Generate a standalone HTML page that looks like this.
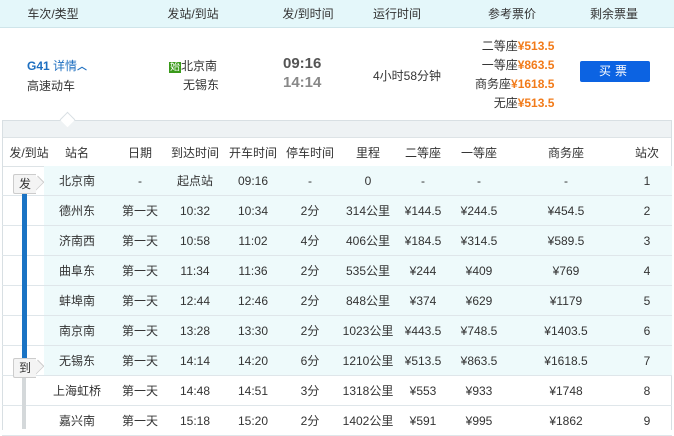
<!DOCTYPE html><html><head><meta charset="utf-8"><style>
body{margin:0;width:674px;height:429px;overflow:hidden;background:#fff;font-family:"Liberation Sans","Noto Sans CJK SC",sans-serif;font-size:12px;color:#333;position:relative}
.a{position:absolute;white-space:nowrap}
.c{position:absolute;width:90px;text-align:center;white-space:nowrap;line-height:14px}
.row{position:absolute;left:2px;width:670px;height:30px;border-bottom:1px solid #dfe6ea;box-sizing:border-box}
.hl{position:absolute;left:42px;right:0;top:0;bottom:0;background:#eefafb}
.row .c{top:8px}
.o{color:#f27b1a;font-weight:bold}
.tag{position:absolute;left:13px;width:22px;height:18px;background:#f4f4f4;border:1px solid #ccc;border-right:none;border-radius:2px 0 0 2px;text-align:center;line-height:18px;font-size:12px}
.tag:after{content:"";position:absolute;right:-7px;top:2px;width:12px;height:12px;background:#f4f4f4;border-right:1px solid #ccc;border-top:1px solid #ccc;transform:rotate(45deg) scaleX(.7);z-index:-1}
</style></head><body>
<div class="a" style="left:0;top:0;width:674px;height:27px;background:#e4f7fa;border-bottom:1px solid #cfe5ea"></div>
<div class="c" style="left:8px;top:7px">车次/类型</div>
<div class="c" style="left:148px;top:7px">发站/到站</div>
<div class="c" style="left:263px;top:7px">发/到时间</div>
<div class="c" style="left:352px;top:7px">运行时间</div>
<div class="c" style="left:467px;top:7px">参考票价</div>
<div class="c" style="left:569px;top:7px">剩余票量</div>

<div class="a" style="left:27px;top:57px;color:#1e6fc0;font-weight:bold">G41 <span style="font-weight:normal">详情</span><span style="font-size:10px">︿</span></div>
<div class="a" style="left:27px;top:77px">高速动车</div>
<div class="a" style="left:169px;top:57px"><span style="background:#3a9a1a;color:#fff;font-size:10px;padding:0 1px">始</span>北京南</div>
<div class="a" style="left:183px;top:76px">无锡东</div>
<div class="a" style="left:283px;top:55px;font-weight:bold;font-size:15px;color:#555">09:16</div>
<div class="a" style="left:283px;top:74px;font-weight:bold;font-size:15px;color:#888">14:14</div>
<div class="a" style="left:373px;top:67px">4小时58分钟</div>
<div class="a" style="left:475px;top:37px;text-align:right;line-height:19px"><div>二等座<span class="o">¥513.5</span></div><div>一等座<span class="o">¥863.5</span></div><div>商务座<span class="o">¥1618.5</span></div><div style="padding-left:12px">无座<span class="o">¥513.5</span></div></div>
<div class="a" style="left:580px;top:61px;width:70px;height:21px;background:#0c63e2;border-radius:2px;color:#fff;text-align:center;line-height:21px;letter-spacing:4px">买票</div>

<div class="a" style="left:2px;top:120px;width:668px;height:309px;border:1px solid #d8dfe3;border-bottom:none"></div>
<div class="a" style="left:3px;top:121px;width:668px;height:16px;background:#eef2f4;border-bottom:1px solid #dde3e6"></div>
<div class="a" style="left:62px;top:114px;width:10px;height:10px;background:#fff;border-left:1px solid #d8dfe3;border-top:1px solid #d8dfe3;transform:rotate(45deg)"></div>
<div class="a" style="left:3px;top:138px;width:668px;height:28px;border-bottom:1px solid #dde3e6"></div>
<div class="c" style="left:-16px;top:146px">发/到站</div>
<div class="c" style="left:32px;top:146px">站名</div>
<div class="c" style="left:95px;top:146px">日期</div>
<div class="c" style="left:150px;top:146px">到达时间</div>
<div class="c" style="left:208px;top:146px">开车时间</div>
<div class="c" style="left:265px;top:146px">停车时间</div>
<div class="c" style="left:323px;top:146px">里程</div>
<div class="c" style="left:378px;top:146px">二等座</div>
<div class="c" style="left:434px;top:146px">一等座</div>
<div class="c" style="left:521px;top:146px">商务座</div>
<div class="c" style="left:602px;top:146px">站次</div>

<div class="row" style="top:166px"><div class="hl"></div><div class="c" style="left:30px">北京南</div><div class="c" style="left:93px">-</div><div class="c" style="left:148px">起点站</div><div class="c" style="left:206px">09:16</div><div class="c" style="left:263px">-</div><div class="c" style="left:321px">0</div><div class="c" style="left:376px">-</div><div class="c" style="left:432px">-</div><div class="c" style="left:519px">-</div><div class="c" style="left:600px">1</div></div>
<div class="row" style="top:196px"><div class="hl"></div><div class="c" style="left:30px">德州东</div><div class="c" style="left:93px">第一天</div><div class="c" style="left:148px">10:32</div><div class="c" style="left:206px">10:34</div><div class="c" style="left:263px">2分</div><div class="c" style="left:321px">314公里</div><div class="c" style="left:376px">¥144.5</div><div class="c" style="left:432px">¥244.5</div><div class="c" style="left:519px">¥454.5</div><div class="c" style="left:600px">2</div></div>
<div class="row" style="top:226px"><div class="hl"></div><div class="c" style="left:30px">济南西</div><div class="c" style="left:93px">第一天</div><div class="c" style="left:148px">10:58</div><div class="c" style="left:206px">11:02</div><div class="c" style="left:263px">4分</div><div class="c" style="left:321px">406公里</div><div class="c" style="left:376px">¥184.5</div><div class="c" style="left:432px">¥314.5</div><div class="c" style="left:519px">¥589.5</div><div class="c" style="left:600px">3</div></div>
<div class="row" style="top:256px"><div class="hl"></div><div class="c" style="left:30px">曲阜东</div><div class="c" style="left:93px">第一天</div><div class="c" style="left:148px">11:34</div><div class="c" style="left:206px">11:36</div><div class="c" style="left:263px">2分</div><div class="c" style="left:321px">535公里</div><div class="c" style="left:376px">¥244</div><div class="c" style="left:432px">¥409</div><div class="c" style="left:519px">¥769</div><div class="c" style="left:600px">4</div></div>
<div class="row" style="top:286px"><div class="hl"></div><div class="c" style="left:30px">蚌埠南</div><div class="c" style="left:93px">第一天</div><div class="c" style="left:148px">12:44</div><div class="c" style="left:206px">12:46</div><div class="c" style="left:263px">2分</div><div class="c" style="left:321px">848公里</div><div class="c" style="left:376px">¥374</div><div class="c" style="left:432px">¥629</div><div class="c" style="left:519px">¥1179</div><div class="c" style="left:600px">5</div></div>
<div class="row" style="top:316px"><div class="hl"></div><div class="c" style="left:30px">南京南</div><div class="c" style="left:93px">第一天</div><div class="c" style="left:148px">13:28</div><div class="c" style="left:206px">13:30</div><div class="c" style="left:263px">2分</div><div class="c" style="left:321px">1023公里</div><div class="c" style="left:376px">¥443.5</div><div class="c" style="left:432px">¥748.5</div><div class="c" style="left:519px">¥1403.5</div><div class="c" style="left:600px">6</div></div>
<div class="row" style="top:346px"><div class="hl"></div><div class="c" style="left:30px">无锡东</div><div class="c" style="left:93px">第一天</div><div class="c" style="left:148px">14:14</div><div class="c" style="left:206px">14:20</div><div class="c" style="left:263px">6分</div><div class="c" style="left:321px">1210公里</div><div class="c" style="left:376px">¥513.5</div><div class="c" style="left:432px">¥863.5</div><div class="c" style="left:519px">¥1618.5</div><div class="c" style="left:600px">7</div></div>
<div class="row" style="top:376px"><div class="c" style="left:30px">上海虹桥</div><div class="c" style="left:93px">第一天</div><div class="c" style="left:148px">14:48</div><div class="c" style="left:206px">14:51</div><div class="c" style="left:263px">3分</div><div class="c" style="left:321px">1318公里</div><div class="c" style="left:376px">¥553</div><div class="c" style="left:432px">¥933</div><div class="c" style="left:519px">¥1748</div><div class="c" style="left:600px">8</div></div>
<div class="row" style="top:406px"><div class="c" style="left:30px">嘉兴南</div><div class="c" style="left:93px">第一天</div><div class="c" style="left:148px">15:18</div><div class="c" style="left:206px">15:20</div><div class="c" style="left:263px">2分</div><div class="c" style="left:321px">1402公里</div><div class="c" style="left:376px">¥591</div><div class="c" style="left:432px">¥995</div><div class="c" style="left:519px">¥1862</div><div class="c" style="left:600px">9</div></div>

<div class="a" style="left:22px;top:190px;width:5px;height:170px;background:#1a73c4"></div>
<div class="a" style="left:22px;top:375px;width:4px;height:54px;background:#d4d8da"></div>
<div class="tag" style="top:174px">发</div>
<div class="tag" style="top:358px">到</div>
</body></html>
